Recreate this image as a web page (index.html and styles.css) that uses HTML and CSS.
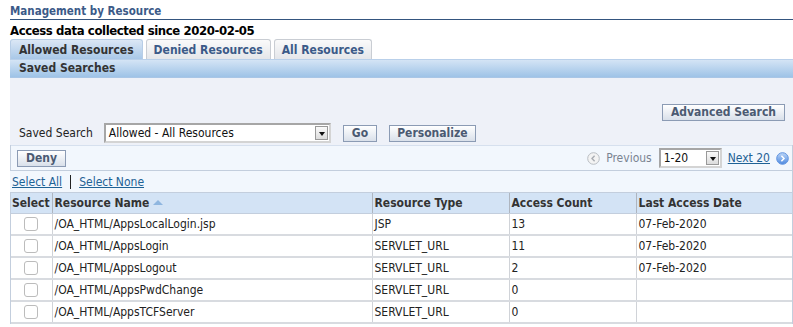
FILE: index.html
```html
<!DOCTYPE html>
<html>
    <head>
        <title>Management by Resource</title>
        <link rel="stylesheet" href="styles.css">
    </head>
    <body>
        <div class="page">
            <div class="title">Management by Resource</div>
            <div class="since">Access data collected since 2020-02-05</div>
            <div class="tabs">
                <span class="tab active">Allowed Resources</span>
                <span class="tab">Denied Resources</span>
                <span class="tab">All Resources</span>
            </div>
            <div class="bar">Saved Searches</div>
            <div class="search">
                <div class="adv"><span class="btn">Advanced Search</span></div>
                <div class="saved">
                    <span class="label">Saved Search</span>
                    <span class="select wide"><span class="val">Allowed - All Resources</span><span class="arrow"></span></span>
                    <span class="btn">Go</span>
                    <span class="btn">Personalize</span>
                </div>
            </div>
            <div class="results">
                <div class="controls">
                    <span class="btn">Deny</span>
                    <div class="nav">
                        <svg class="circ" width="13" height="13" viewBox="0 0 13 13">
                            <circle cx="6.5" cy="6.5" r="5.8" fill="#f3f3f3" stroke="#b9bdc3"/>
                            <path d="M7.6 3.8 L5 6.5 L7.6 9.2" fill="none" stroke="#a9adb3" stroke-width="1.4"/>
                        </svg>
                        <span class="prevtext">Previous</span>
                        <span class="select small"><span class="val">1-20</span><span class="arrow"></span></span>
                        <a class="link" href="#">Next 20</a>
                        <svg class="circ" width="13" height="13" viewBox="0 0 13 13">
                            <defs>
                                <linearGradient id="nx" x1="0" y1="0" x2="0" y2="1">
                                    <stop offset="0" stop-color="#bcd6f7"/>
                                    <stop offset="1" stop-color="#4f8ae0"/>
                                </linearGradient>
                            </defs>
                            <circle cx="6.5" cy="6.5" r="5.8" fill="url(#nx)" stroke="#5f93df"/>
                            <path d="M5.4 3.8 L8 6.5 L5.4 9.2" fill="none" stroke="#fff" stroke-width="1.5"/>
                        </svg>
                    </div>
                </div>
                <div class="selrow">
                    <a class="link" href="#">Select All</a>
                    <span class="sep"></span>
                    <a class="link" href="#">Select None</a>
                </div>
                <table class="grid">
                    <colgroup>
                        <col style="width:41px">
                        <col style="width:320px">
                        <col style="width:137px">
                        <col style="width:127px">
                        <col>
                    </colgroup>
                    <thead>
                        <tr>
                            <th class="c">Select</th>
                            <th>Resource Name <span class="sort"></span></th>
                            <th>Resource Type</th>
                            <th>Access Count</th>
                            <th>Last Access Date</th>
                        </tr>
                    </thead>
                    <tbody>
                        <tr><td class="c"><span class="chk"></span></td><td>/OA_HTML/AppsLocalLogin.jsp</td><td>JSP</td><td>13</td><td>07-Feb-2020</td></tr>
                        <tr><td class="c"><span class="chk"></span></td><td>/OA_HTML/AppsLogin</td><td>SERVLET_URL</td><td>11</td><td>07-Feb-2020</td></tr>
                        <tr><td class="c"><span class="chk"></span></td><td>/OA_HTML/AppsLogout</td><td>SERVLET_URL</td><td>2</td><td>07-Feb-2020</td></tr>
                        <tr><td class="c"><span class="chk"></span></td><td>/OA_HTML/AppsPwdChange</td><td>SERVLET_URL</td><td>0</td><td></td></tr>
                        <tr><td class="c"><span class="chk"></span></td><td>/OA_HTML/AppsTCFServer</td><td>SERVLET_URL</td><td>0</td><td></td></tr>
                    </tbody>
                </table>
            </div>
        </div>
    </body>
</html>
```

FILE: styles.css
```css
body { margin: 0; padding: 0; font-family: "DejaVu Sans Condensed", Tahoma, sans-serif; font-size: 12px; color: #000; background: #fff; }
.page { padding: 4px 0 0 10px; }

.title { font-weight: bold; font-size: 11.5px; color: #3b5a88; height: 15px; border-bottom: 1px solid #34557f; }
.since { font-weight: bold; font-size: 13px; letter-spacing: -0.4px; margin-top: 2px; height: 17px; line-height: 17px; }

.tabs { display: flex; gap: 3px; height: 20px; }
.tab { padding: 0 8px; line-height: 20px; font-weight: bold; color: #3b5a88; border: 1px solid #c9cdd3; border-bottom: none; border-radius: 3px 3px 0 0; background: linear-gradient(#fafafa, #e4e6ea); box-sizing: border-box; height: 20px; }
.tab.active { color: #333; background: linear-gradient(#dbe7f5, #a9c8e8); border-color: #b7cde6; }
.tab + .tab { padding: 0 7px; }

.bar { height: 17px; line-height: 17px; padding-left: 9px; font-weight: bold; color: #333; background: linear-gradient(#d4e4f5, #9ec3e7); border-top: 1px solid #b9d0ea; border-bottom: 1px solid #a9c6e6; }

.search { background: #eef1f8; padding: 26px 0 1px 0; }
.adv { display: flex; justify-content: flex-end; padding-right: 8px; }
.saved { display: flex; align-items: center; gap: 12px; padding-left: 9px; height: 22px; margin-top: 1px; }
.saved .label { color: #222; margin-right: -1px; }

.btn { display: inline-block; height: 17px; line-height: 15px; padding: 0 8px; box-sizing: border-box; border: 1px solid #8b9bb4; background: linear-gradient(#ffffff, #d9e0ea); font-weight: bold; color: #4b5a72; font-size: 12px; }
.saved .btn:last-child { padding: 0 7px; }

.select { display: inline-flex; align-items: center; height: 20px; box-sizing: border-box; border: 2px solid #a6a6a6; border-right-color: #d4d4d4; border-bottom-color: #d4d4d4; background: #fff; }
.select .val { flex: 1; padding-left: 3px; color: #111; }
.select .arrow { width: 13px; height: 14px; margin-right: 1px; box-sizing: border-box; border: 1px solid #999; background: linear-gradient(#fafafa, #dcdcdc); position: relative; }
.select .arrow::after { content: ""; position: absolute; left: 3px; top: 5px; border-left: 3px solid transparent; border-right: 3px solid transparent; border-top: 4px solid #111; }
.select.wide { width: 227px; }
.select.small { width: 63px; }

.results { width: 781px; border-left: 1px solid #c3cedd; border-right: 1px solid #c3cedd; }
.controls { display: flex; align-items: center; justify-content: space-between; height: 24px; padding: 0 6px; background: #f2f7fd; border-bottom: 1px solid #c3cedd; border-top: 1px solid #d6e0ee; }
.nav { display: flex; align-items: center; gap: 6px; margin-right: -3px; }
.prevtext { color: #7a8391; margin-right: 1px; }
.circ { display: block; }

.link { color: #1f6295; text-decoration: underline; }
.selrow { display: flex; align-items: center; height: 21px; background: #f2f7fd; margin-left: -1px; padding-left: 2px; }
.sep { width: 1px; height: 14px; background: #222; margin: 0 8px 0 8px; }

.grid { width: 100%; border-collapse: collapse; table-layout: fixed; }
.grid th { background: #d3e3f5; text-align: left; font-weight: bold; color: #333; height: 20px; padding: 0 2px; border-left: 1px solid #aeb5bf; border-top: 1px solid #c3cedd; border-bottom: 1px solid #c3cedd; white-space: nowrap; }
.grid th.c { padding: 0 1px; border-left: none; }
.grid td { height: 20px; padding: 0 2px; border-left: 1px solid #d0d3d8; border-bottom: 2px solid #d8dbe0; color: #222; white-space: nowrap; }
.grid td.c { border-left: none; text-align: center; }
.sort { display: inline-block; border-left: 5px solid transparent; border-right: 5px solid transparent; border-bottom: 5px solid #8fb6df; vertical-align: 2px; }
.chk { display: inline-block; width: 12px; height: 12px; border: 1px solid #bcbcbc; border-radius: 3px; background: #fff; vertical-align: middle; }
```
